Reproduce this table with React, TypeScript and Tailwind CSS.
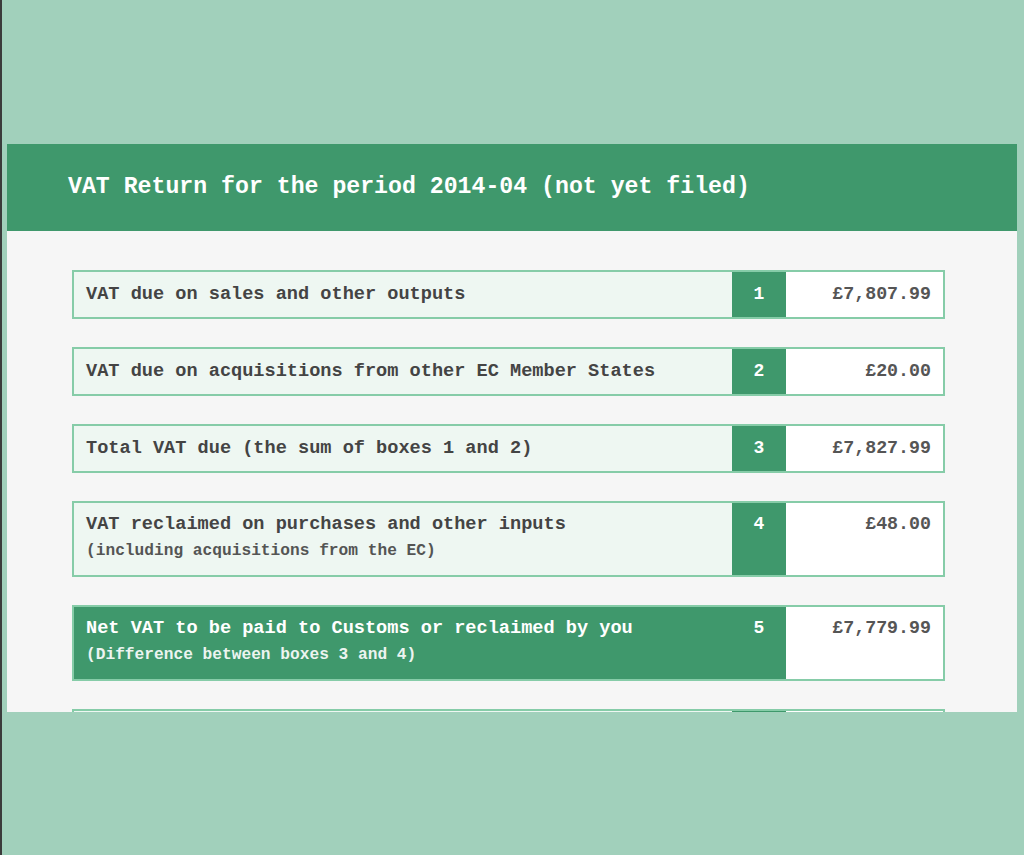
type Row = {
  box: number;
  label: string;
  note?: string;
  value: string;
  strong?: boolean;
};

const rows: Row[] = [
  { box: 1, label: "VAT due on sales and other outputs", value: "£7,807.99" },
  { box: 2, label: "VAT due on acquisitions from other EC Member States", value: "£20.00" },
  { box: 3, label: "Total VAT due (the sum of boxes 1 and 2)", value: "£7,827.99" },
  {
    box: 4,
    label: "VAT reclaimed on purchases and other inputs",
    note: "(including acquisitions from the EC)",
    value: "£48.00",
  },
  {
    box: 5,
    label: "Net VAT to be paid to Customs or reclaimed by you",
    note: "(Difference between boxes 3 and 4)",
    value: "£7,779.99",
    strong: true,
  },
];

function ReturnRow({ row }: { row: Row }) {
  const tall = !!row.note;
  return (
    <div
      className={`flex w-[873px] border-2 border-[#86cca8] items-stretch ${
        tall ? "h-[76px]" : "h-[49px]"
      }`}
    >
      <div
        className={`w-[658px] px-[12px] flex flex-col ${tall ? "pt-[8px]" : "justify-center"} ${
          row.strong ? "bg-[#3f986c] text-white" : "bg-[#eef7f2] text-[#444]"
        }`}
      >
        <div className="text-[18.6px] leading-[27px] font-bold whitespace-nowrap">{row.label}</div>
        {row.note && (
          <div className="text-[16.2px] leading-[27px] font-bold whitespace-nowrap opacity-90">{row.note}</div>
        )}
      </div>
      <div
        className={`w-[54px] bg-[#3f986c] text-white text-[18px] font-bold flex justify-center ${
          tall ? "pt-[8px] leading-[27px]" : "items-center"
        }`}
      >
        {row.box}
      </div>
      <div
        className={`flex-1 bg-white text-[#555] text-[18.3px] font-bold flex justify-end pr-[12px] ${
          tall ? "pt-[8px] leading-[27px]" : "items-center"
        }`}
      >
        {row.value}
      </div>
    </div>
  );
}

export default function App() {
  return (
    <div
      className="min-h-[855px] bg-[#a1d0bb] border-l-2 border-[#3b3b3b] pt-[144px]"
      style={{ fontFamily: '"Liberation Mono", "Courier New", monospace' }}
    >
      <div className="ml-[5px] w-[1010px] h-[568px] overflow-hidden bg-[#f6f6f6]">
        {/* Header */}
        <div className="h-[87px] bg-[#3f986c] flex items-center pl-[61px]">
          <h1 className="text-white font-bold text-[23.2px] whitespace-nowrap">
            VAT Return for the period 2014-04 (not yet filed)
          </h1>
        </div>

        {/* Boxes */}
        <div className="pl-[65px] pt-[39px] flex flex-col gap-[28px]">
          {rows.map((r) => (
            <ReturnRow key={r.box} row={r} />
          ))}
          {/* next box, cut off by the panel edge */}
          <div className="flex w-[873px] h-[49px] border-2 border-[#86cca8]">
            <div className="w-[658px] bg-[#eef7f2]" />
            <div className="w-[54px] bg-[#3f986c]" />
            <div className="flex-1 bg-white" />
          </div>
        </div>
      </div>
    </div>
  );
}
